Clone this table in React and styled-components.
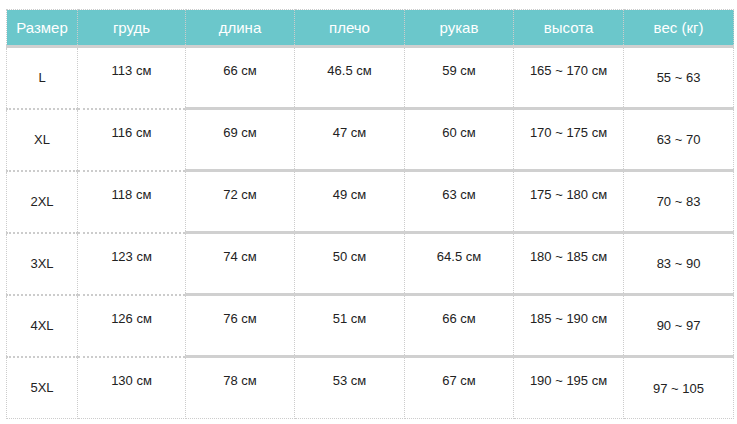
import styled, { createGlobalStyle } from "styled-components";

const GlobalStyle = createGlobalStyle`
    body{
        margin:0;
        background:#FFF;
        font-family:"Liberation Sans", Arial, sans-serif;
    }
`;

const headers = ['Размер','грудь','длина','плечо','рукав','высота','вес (кг)'];
const widths = [71,108,109,110,109,110,110];

const rows = [
    ['L','113 см','66 см','46.5 см','59 см','165 ~ 170 см','55 ~ 63'],
    ['XL','116 см','69 см','47 см','60 см','170 ~ 175 см','63 ~ 70'],
    ['2XL','118 см','72 см','49 см','63 см','175 ~ 180 см','70 ~ 83'],
    ['3XL','123 см','74 см','50 см','64.5 см','180 ~ 185 см','83 ~ 90'],
    ['4XL','126 см','76 см','51 см','66 см','185 ~ 190 см','90 ~ 97'],
    ['5XL','130 см','78 см','53 см','67 см','190 ~ 195 см','97 ~ 105'],
];

export default function App (){
    const head = headers.map((title,index)=>(
        <HeadCell key={title} style={{width: widths[index]}}>{title}</HeadCell>
    ));

    const body = rows.map((row)=>(
        <tr key={row[0]}>
            {row.map((value,index)=>{
                const outer = index === 0 || index === row.length - 1;
                return (
                    <Cell key={index} solid={index > 1} top={!outer}>{value}</Cell>
                );
            })}
        </tr>
    ));

    return (
        <>
            <GlobalStyle />
            <Wrapper>
                <Table>
                    <thead><tr>{head}</tr></thead>
                    <tbody>{body}</tbody>
                </Table>
            </Wrapper>
        </>
    );
}

const Wrapper = styled.div`
    padding: 9px 0 0 6px;
`;

const Table = styled.table`
    border-collapse:collapse;
    table-layout:fixed;
    width:727px;
`;

const HeadCell = styled.th`
    height:37px;
    padding:0;
    background-color:#6BC7CB;
    color:#FFF;
    font-weight:400;
    font-size:15px;
    text-align:center;
    vertical-align:middle;
    border:1px dotted #CCC;
    border-bottom:3px solid #D0D0D0;
    box-sizing:border-box;
`;

const Cell = styled.td`
    height:62px;
    padding:${props => props.top ? "15px 0 0" : "0"};
    box-sizing:border-box;
    font-size:13px;
    color:#222;
    text-align:center;
    vertical-align:${props => props.top ? "top" : "middle"};
    border:1px dotted #CCC;
    border-top:${props => props.solid ? "3px solid #D0D0D0" : "2px dotted #CCC"};
`;
